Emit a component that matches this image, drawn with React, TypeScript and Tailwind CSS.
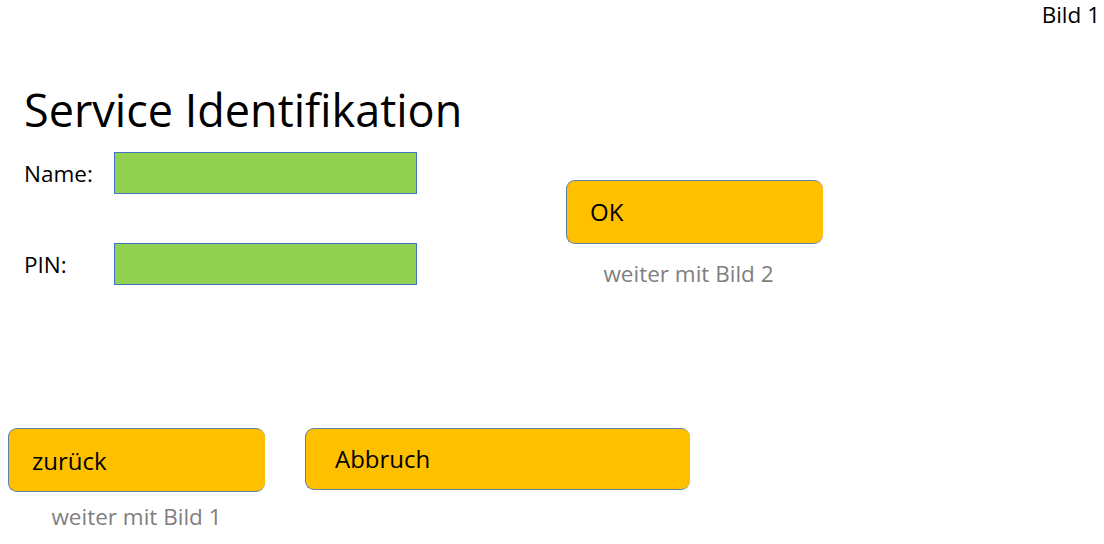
export default function App() {
  return (
    <div className="w-[1104px] h-[544px] bg-white flex flex-col font-['Open_Sans',sans-serif] text-black overflow-hidden">
      <div className="flex justify-end pr-[4px]">
        <span className="text-[22.5px] leading-[30px]">Bild 1</span>
      </div>

      <h1 className="ml-[24px] mt-[54px] text-[45px] leading-[52px]">Service Identifikation</h1>

      <div className="flex mt-[16px]">
        <div className="flex flex-col gap-[49px] pl-[24px]">
          <div className="flex items-center">
            <span className="w-[90px] pt-[2px] text-[22.5px] leading-[30px]">Name:</span>
            <div className="w-[303px] h-[42px] bg-[#92d050] border border-[#4472c4]" />
          </div>
          <div className="flex items-center">
            <span className="w-[90px] pt-[2px] text-[22.5px] leading-[30px]">PIN:</span>
            <div className="w-[303px] h-[42px] bg-[#92d050] border border-[#4472c4]" />
          </div>
        </div>

        <div className="ml-[149px] mt-[28px] flex flex-col items-center w-[257px]">
          <button className="w-full h-[64px] flex items-center pl-[23px] bg-[#ffc000] border border-r-0 border-[#5a7fa8] rounded-[9px] text-[24px] leading-[32px]">
            OK
          </button>
          <span className="mt-[15px] -ml-[12px] text-[22.5px] leading-[30px] text-[#7f7f7f]">weiter mit Bild 2</span>
        </div>
      </div>

      <div className="mt-auto pb-[12px] pl-[8px] flex items-start gap-[40px]">
        <div className="flex flex-col items-center w-[257px]">
          <button className="w-full h-[64px] flex items-center pl-[23px] pt-[2px] bg-[#ffc000] border border-r-0 border-[#5a7fa8] rounded-[9px] text-[24px] leading-[32px]">
            zurück
          </button>
          <span className="mt-[10px] text-[22.5px] leading-[30px] text-[#7f7f7f]">weiter mit Bild 1</span>
        </div>
        <button className="w-[385px] h-[62px] flex items-center pl-[29px] bg-[#ffc000] border border-r-0 border-[#5a7fa8] rounded-[9px] text-[24px] leading-[32px]">
          Abbruch
        </button>
      </div>
    </div>
  );
}
